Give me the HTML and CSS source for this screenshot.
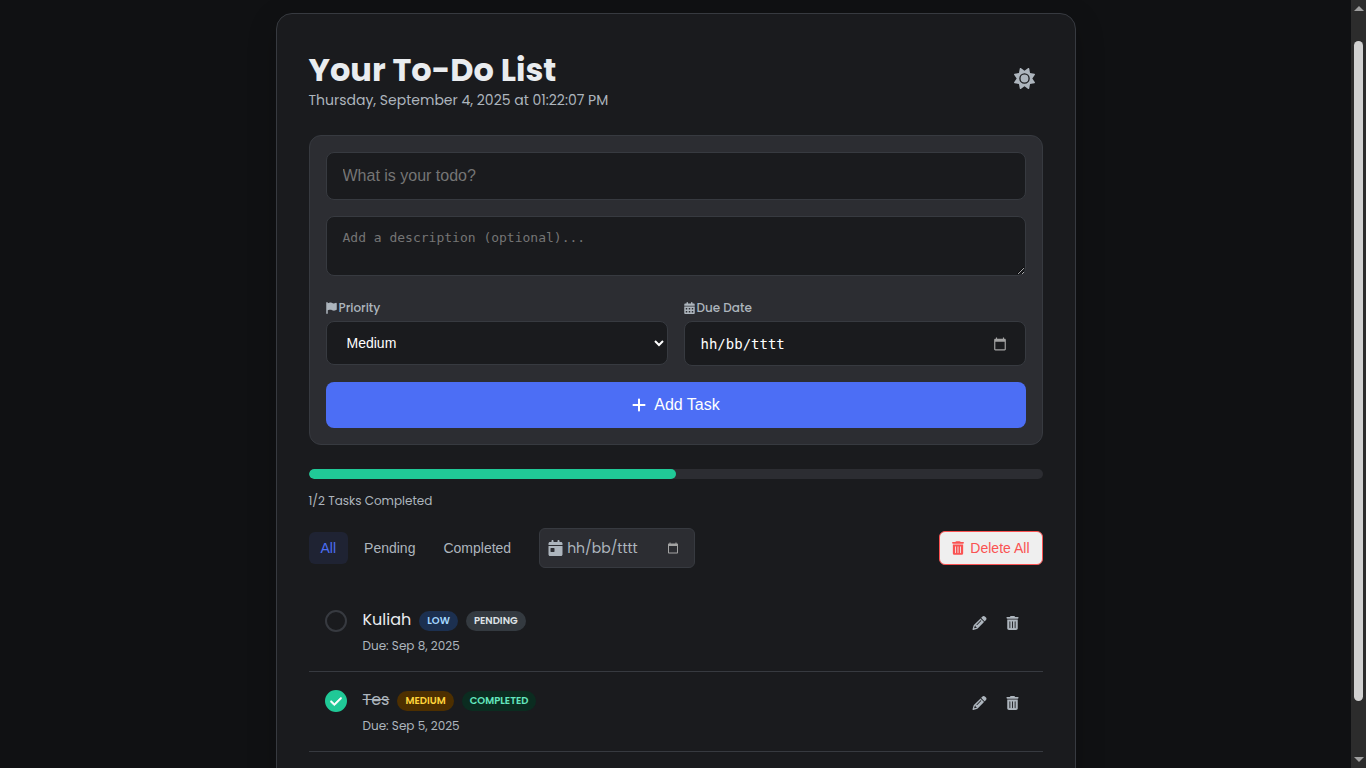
FILE: index.html
```html
<!DOCTYPE html>
<html lang="en">
<head>
<meta charset="utf-8">
<meta name="viewport" content="width=device-width, initial-scale=1">
<title>Your To-Do List</title>
<link rel="stylesheet" href="styles.css">
</head>
<body>
<svg class="sprite" aria-hidden="true">
  <symbol id="trash" viewBox="0 0 448 512"><path d="M135.2 17.7C140.6 6.8 151.7 0 163.8 0H284.2c12.1 0 23.2 6.8 28.6 17.7L320 32h96c17.7 0 32 14.3 32 32s-14.3 32-32 32H32C14.3 96 0 81.7 0 64S14.3 32 32 32h96l7.2-14.3zM32 128H416V448c0 35.3-28.7 64-64 64H96c-35.3 0-64-28.7-64-64V128zm96 64c-8.8 0-16 7.200-16 16V432c0 8.800 7.200 16 16 16s16-7.200 16-16V208c0-8.800-7.200-16-16-16zm96 0c-8.800 0-16 7.200-16 16V432c0 8.800 7.200 16 16 16s16-7.200 16-16V208c0-8.800-7.200-16-16-16zm96 0c-8.800 0-16 7.200-16 16V432c0 8.800 7.200 16 16 16s16-7.200 16-16V208c0-8.800-7.200-16-16-16z"/></symbol>
  <symbol id="pencil" viewBox="0 0 512 512"><path d="M410.3 231l11.3-11.3-33.9-33.9-62.1-62.1L291.700 89.800l-11.300 11.300-22.600 22.600L58.600 322.900c-10.400 10.400-18 23.300-22.200 37.400L1 480.700c-2.500 8.400-.2 17.500 6.100 23.700s15.300 8.500 23.700 6.100l120.300-35.400c14.100-4.200 27-11.800 37.400-22.200L387.700 253.700 410.300 231zM160 399.400l-9.100 22.700c-4 3.100-8.500 5.400-13.300 6.900L59.400 452l23-78.100c1.400-4.900 3.800-9.400 6.900-13.300l22.700-9.100v32c0 8.800 7.200 16 16 16h32zM362.700 18.700L348.300 33.200 325.700 55.800 314.300 67.100l33.900 33.900 62.100 62.100 33.900 33.900 11.300-11.300 22.600-22.600 14.500-14.500c25-25 25-65.500 0-90.500L453.300 18.700c-25-25-65.500-25-90.500 0zm-47.400 168l-144 144c-6.200 6.200-16.400 6.200-22.600 0s-6.200-16.400 0-22.600l144-144c6.200-6.200 16.400-6.200 22.600 0s6.200 16.400 0 22.600z"/></symbol>
  <symbol id="picker" viewBox="0 0 24 24"><path d="M20 3h-1V1h-2v2H7V1H5v2H4c-1.100 0-2 .9-2 2v16c0 1.100.9 2 2 2h16c1.100 0 2-.9 2-2V5c0-1.100-.9-2-2-2zm0 18H4V8h16v13z"/></symbol>
  <symbol id="check" viewBox="0 0 448 512"><path d="M438.600 105.400c12.500 12.500 12.500 32.800 0 45.300l-256 256c-12.500 12.500-32.800 12.500-45.300 0l-128-128c-12.500-12.500-12.500-32.800 0-45.300s32.800-12.500 45.300 0L160 338.700 393.400 105.400c12.500-12.500 32.800-12.500 45.300 0z"/></symbol>
</svg>

<div class="page">
  <main class="card">
    <header class="header">
      <div>
        <h1 class="title">Your To-Do List</h1>
        <p class="clock">Thursday, September 4, 2025 at 01:22:07 PM</p>
      </div>
      <button class="theme-toggle" type="button" aria-label="Toggle theme">
        <svg viewBox="0 0 512 512"><path d="M361.500 1.200c5 2.100 8.600 6.600 9.600 11.900L391 121l107.900 19.800c5.300 1 9.800 4.600 11.900 9.600s1.500 10.700-1.600 15.200L446.900 256l62.300 90.300c3.100 4.500 3.700 10.200 1.600 15.200s-6.600 8.600-11.900 9.600L391 391 371.100 498.900c-1 5.300-4.600 9.800-9.600 11.900s-10.700 1.500-15.200-1.600L256 446.900l-90.300 62.300c-4.500 3.100-10.200 3.700-15.200 1.600s-8.600-6.600-9.600-11.900L121 391 13.100 371.100c-5.300-1-9.800-4.600-11.900-9.600s-1.500-10.700 1.600-15.200L65.100 256 2.800 165.700c-3.100-4.500-3.700-10.200-1.600-15.200s6.600-8.600 11.900-9.600L121 121 140.900 13.100c1-5.300 4.600-9.800 9.600-11.900s10.700-1.500 15.200 1.600L256 65.100 346.300 2.800c4.500-3.100 10.200-3.700 15.200-1.600zM160 256a96 96 0 1 1 192 0 96 96 0 1 1 -192 0zm224 0a128 128 0 1 0 -256 0 128 128 0 1 0 256 0z"/></svg>
      </button>
    </header>

    <form class="task-form">
      <input class="field field-title" type="text" aria-label="Task title" placeholder="What is your todo?">
      <textarea class="field field-desc" aria-label="Description" placeholder="Add a description (optional)..."></textarea>
      <div class="row">
        <div class="group">
          <label class="label" for="priority">
            <svg viewBox="0 0 448 512"><path d="M64 32C64 14.300 49.700 0 32 0S0 14.300 0 32V64 368 480c0 17.700 14.300 32 32 32s32-14.300 32-32V352l64.300-16.100c41.100-10.300 84.600-5.500 122.500 13.400c44.200 22.100 95.500 24.800 141.700 7.400l34.700-13c12.500-4.700 20.800-16.600 20.800-30V66.100c0-23-24.200-38-44.800-27.700l-9.600 4.800c-46.300 23.200-100.800 23.200-147.100 0c-35.100-17.600-75.400-22-113.500-12.500L64 48V32z"/></svg>Priority
          </label>
          <select class="field field-select" id="priority">
            <option>Low</option>
            <option selected>Medium</option>
            <option>High</option>
          </select>
        </div>
        <div class="group">
          <label class="label" for="due">
            <svg viewBox="0 0 448 512"><path fill-rule="evenodd" d="M128 0c17.700 0 32 14.300 32 32V64H288V32c0-17.700 14.300-32 32-32s32 14.300 32 32V64h48c26.500 0 48 21.500 48 48v48H0V112C0 85.500 21.500 64 48 64H96V32c0-17.700 14.300-32 32-32zM0 192H448V464c0 26.500-21.500 48-48 48H48c-26.500 0-48-21.500-48-48zM64 256h64v64H64zM192 256h64v64h-64zM320 256h64v64h-64zM64 384h64v64H64zM192 384h64v64h-64zM320 384h64v64h-64z"/></svg>Due Date
          </label>
          <div class="field field-date">
            <input class="date-text" id="due" type="text" placeholder="hh/bb/tttt">
            <button class="picker" type="button" aria-label="Pick due date"><svg><use href="#picker"/></svg></button>
          </div>
        </div>
      </div>
      <button class="add" type="submit">
        <svg viewBox="0 0 448 512"><path d="M256 80c0-17.700-14.300-32-32-32s-32 14.300-32 32V224H48c-17.700 0-32 14.300-32 32s14.300 32 32 32H192V432c0 17.700 14.300 32 32 32s32-14.300 32-32V288H400c17.700 0 32-14.300 32-32s-14.300-32-32-32H256V80z"/></svg>Add Task
      </button>
    </form>

    <div class="progress"><div class="progress-bar" style="width: 50%"></div></div>
    <p class="progress-text">1/2 Tasks Completed</p>

    <div class="toolbar">
      <div class="tabs">
        <button class="tab active" type="button">All</button>
        <button class="tab" type="button">Pending</button>
        <button class="tab" type="button">Completed</button>
      </div>
      <div class="date-filter">
        <svg class="day-icon" viewBox="0 0 448 512"><path d="M128 0c17.700 0 32 14.300 32 32V64H288V32c0-17.700 14.300-32 32-32s32 14.300 32 32V64h48c26.500 0 48 21.500 48 48v48H0V112C0 85.500 21.500 64 48 64H96V32c0-17.700 14.300-32 32-32zM0 192H448V464c0 26.500-21.500 48-48 48H48c-26.500 0-48-21.500-48-48V192zm80 64c-8.800 0-16 7.200-16 16v96c0 8.800 7.200 16 16 16h96c8.800 0 16-7.200 16-16V272c0-8.800-7.200-16-16-16H80z"/></svg>
        <input class="filter-text" type="text" aria-label="Filter by date" placeholder="hh/bb/tttt">
        <button class="picker small" type="button" aria-label="Pick filter date"><svg><use href="#picker"/></svg></button>
      </div>
      <button class="delete-all" type="button"><svg><use href="#trash"/></svg>Delete All</button>
    </div>

    <ul class="tasks">
      <li class="task">
        <span class="tick"><input class="tick-box" id="t1" type="checkbox"><svg><use href="#check"/></svg></span>
        <div class="task-body">
          <div class="task-head">
            <label class="task-title" for="t1">Kuliah</label>
            <span class="badge low">LOW</span>
            <span class="badge pending">PENDING</span>
          </div>
          <p class="due">Due: Sep 8, 2025</p>
        </div>
        <div class="actions">
          <button class="action" type="button" aria-label="Edit Kuliah"><svg class="edit"><use href="#pencil"/></svg></button>
          <button class="action" type="button" aria-label="Delete Kuliah"><svg><use href="#trash"/></svg></button>
        </div>
      </li>
      <li class="task done">
        <span class="tick"><input class="tick-box" id="t2" type="checkbox" checked><svg><use href="#check"/></svg></span>
        <div class="task-body">
          <div class="task-head">
            <label class="task-title" for="t2">Tes</label>
            <span class="badge medium">MEDIUM</span>
            <span class="badge completed">COMPLETED</span>
          </div>
          <p class="due">Due: Sep 5, 2025</p>
        </div>
        <div class="actions">
          <button class="action" type="button" aria-label="Edit Tes"><svg class="edit"><use href="#pencil"/></svg></button>
          <button class="action" type="button" aria-label="Delete Tes"><svg><use href="#trash"/></svg></button>
        </div>
      </li>
    </ul>
  </main>
</div>

<div class="scrollbar" aria-hidden="true">
  <span class="arrow up"></span>
  <span class="thumb"></span>
  <span class="arrow down"></span>
</div>
</body>
</html>
```

FILE: styles.css
```css
:root {
  --bg: #101113;
  --card: #1a1b1e;
  --panel: #2c2d32;
  --line: #373a40;
  --text: #e9ecef;
  --muted: #adb5bd;
  --primary: #4c6ef5;
  --success: #20c997;
  --danger: #fa5252;
}

* { box-sizing: border-box; }

body {
  margin: 0;
  height: 100vh;
  display: flex;
  overflow: hidden;
  background: var(--bg);
  color: var(--text);
  font-family: Poppins, Inter, "Open Sans", sans-serif;
}

h1, p, ul { margin: 0; padding: 0; }
svg { fill: currentColor; flex: none; }
.sprite { display: none; }
button, input, select {
  font-family: "Liberation Sans", Arial, sans-serif;
}
button {
  border: 0;
  padding: 0;
  background: none;
  color: var(--muted);
  cursor: pointer;
}

.page {
  flex: 1;
  min-width: 0;
  padding-top: 13px;
  overflow: hidden;
}

.card {
  max-width: 800px;
  margin: 0 auto;
  padding: 36px 32px;
  background: var(--card);
  border: 1px solid var(--line);
  border-radius: 16px;
  box-shadow: 0 8px 30px rgba(0, 0, 0, 0.2);
}

.header {
  display: flex;
  align-items: center;
  justify-content: space-between;
  margin-bottom: 24px;
}
.title {
  font-size: 32px;
  line-height: 40px;
  font-weight: 700;
}
.clock {
  color: var(--muted);
  font-size: 14px;
  line-height: 21px;
}
.theme-toggle {
  display: flex;
  padding: 8px;
  margin-bottom: 4px;
}
.theme-toggle svg { width: 21px; height: 21px; }

.task-form {
  display: flex;
  flex-direction: column;
  gap: 16px;
  padding: 16px;
  background: var(--panel);
  border: 1px solid var(--line);
  border-radius: 12px;
}
.field {
  width: 100%;
  background: var(--card);
  border: 1px solid var(--line);
  border-radius: 8px;
  color: #fff;
}
::placeholder { color: #757575; opacity: 1; }
.field-title {
  height: 48px;
  padding: 0 16px;
  font-size: 16px;
}
.field-desc {
  display: block;
  height: 60px;
  padding: 12px 16px;
  font-family: Consolas, "DejaVu Sans Mono", monospace;
  font-size: 13px;
  line-height: 18px;
  resize: vertical;
}
.row { display: flex; gap: 16px; }
.group { flex: 1; min-width: 0; }
.label {
  display: flex;
  align-items: center;
  gap: 2px;
  padding: 6px 0 3px;
  color: var(--muted);
  font-size: 12px;
  line-height: 20px;
  font-weight: 500;
}
.label svg { width: 11px; height: 12px; }
.field-select {
  display: block;
  height: 44px;
  padding: 0 0 0 16px;
  font-size: 14px;
}
.field-date {
  display: flex;
  align-items: center;
  height: 45px;
  padding: 0 18px 0 16px;
}
.date-text, .filter-text {
  flex: 1;
  min-width: 0;
  padding: 0;
  border: 0;
  background: none;
}
.date-text {
  font-family: Consolas, "DejaVu Sans Mono", monospace;
  font-size: 14px;
}
.date-text::placeholder { color: #fff; }
.picker { display: flex; color: #a3a3a3; }
.picker svg { width: 14px; height: 14px; }
.picker.small svg { width: 12px; height: 12px; }

.add {
  display: flex;
  align-items: center;
  justify-content: center;
  gap: 7px;
  height: 46px;
  border-radius: 8px;
  background: var(--primary);
  color: #fff;
  font-size: 16px;
}
.add svg { width: 16px; height: 16px; }

.progress {
  height: 10px;
  margin-top: 24px;
  border-radius: 5px;
  background: var(--panel);
  overflow: hidden;
}
.progress-bar {
  height: 100%;
  border-radius: 5px;
  background: var(--success);
}
.progress-text {
  margin-top: 12px;
  color: var(--muted);
  font-size: 12px;
  line-height: 20px;
}

.toolbar {
  display: flex;
  align-items: center;
  gap: 16px;
  margin: 17px 0 24px;
}
.tabs { display: flex; gap: 4px; }
.tab {
  height: 32px;
  padding: 0 12px;
  border-radius: 6px;
  font-size: 14px;
}
.tab.active {
  background: rgba(76, 110, 245, 0.1);
  color: var(--primary);
}
.date-filter {
  display: flex;
  align-items: center;
  gap: 4px;
  width: 156px;
  height: 40px;
  padding: 0 15px 0 8px;
  background: var(--panel);
  border: 1px solid var(--line);
  border-radius: 6px;
  color: var(--muted);
}
.day-icon { width: 15px; height: 16px; }
.filter-text {
  font-family: Poppins, Inter, sans-serif;
  font-size: 14px;
}
.filter-text::placeholder { color: var(--muted); }
.delete-all {
  display: flex;
  align-items: center;
  gap: 6px;
  height: 34px;
  margin-left: auto;
  padding: 0 12px;
  border: 1px solid var(--danger);
  border-radius: 6px;
  background: #efefef;
  color: var(--danger);
  font-size: 14px;
}
.delete-all svg { width: 12px; height: 14px; }

.tasks { list-style: none; }
.task {
  display: flex;
  align-items: flex-start;
  gap: 16px;
  padding: 16px 16px 15px;
  border-bottom: 1px solid var(--line);
}
.tick {
  display: grid;
  place-items: center;
  margin-top: 2px;
}
.tick > * { grid-area: 1 / 1; }
.tick-box {
  appearance: none;
  width: 22px;
  height: 22px;
  margin: 0;
  border: 2px solid var(--line);
  border-radius: 50%;
}
.tick-box:checked {
  border-color: var(--success);
  background: var(--success);
}
.tick svg {
  width: 12px;
  height: 13px;
  color: #fff;
  stroke: currentColor;
  stroke-width: 24px;
  visibility: hidden;
  pointer-events: none;
}
.tick-box:checked + svg { visibility: visible; }
.task-body { flex: 1; min-width: 0; }
.task-head {
  display: flex;
  align-items: center;
  gap: 8px;
  height: 26px;
}
.task-title {
  padding-bottom: 2px;
  font-size: 16px;
  line-height: 24px;
}
.done .task-title {
  color: var(--muted);
  text-decoration: line-through;
}
.badge {
  padding: 0 8px;
  border-radius: 10px;
  font-size: 10px;
  line-height: 20px;
  font-weight: 600;
}
.low { background: #1c3050; color: #a5d8ff; }
.pending { background: #343a40; color: #dee2e6; }
.medium { background: #4d2f00; color: #ffd43b; }
.completed { background: #0b2c20; color: #63e6be; }
.due {
  margin-top: 2px;
  color: var(--muted);
  font-size: 12px;
  line-height: 20px;
}
.actions { display: flex; gap: 4px; }
.action {
  display: grid;
  place-items: center;
  width: 29px;
  height: 30px;
}
.action svg { width: 13px; height: 14px; }
.action .edit { width: 15px; height: 14px; }

.scrollbar {
  display: flex;
  flex-direction: column;
  align-items: center;
  width: 15px;
  padding: 6px 0;
  background: #2c2c2c;
}
.arrow {
  border: 5px solid transparent;
}
.up { border-top: 0; border-bottom-color: #9f9f9f; }
.down { border-bottom: 0; border-top-color: #9f9f9f; }
.thumb {
  flex: 1;
  width: 9px;
  margin: 30px 0 56px;
  border-radius: 5px;
  background: #d1d1d1;
}
```
